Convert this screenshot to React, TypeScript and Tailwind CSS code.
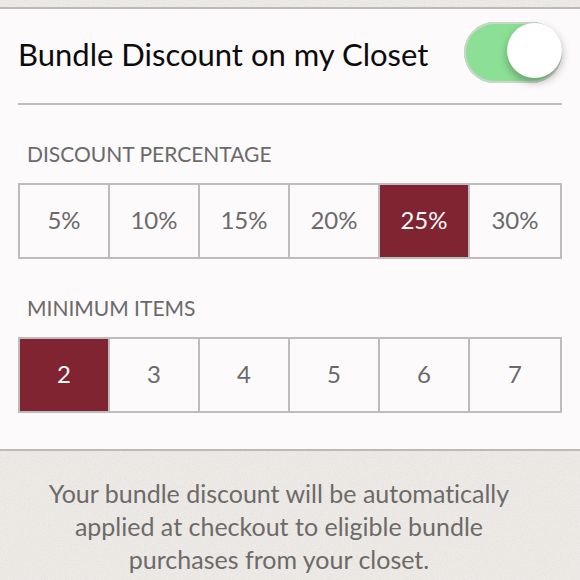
import { useState } from "react";

type SegmentGroupProps = {
  label: string;
  name: string;
  options: number[];
  suffix?: string;
  value: number;
  onChange: (value: number) => void;
};

function SegmentGroup({ label, name, options, suffix = "", value, onChange }: SegmentGroupProps) {
  return (
    <fieldset>
      <legend className="mb-[15px] px-[9px] text-[21px] leading-7 text-[#6b696a] uppercase">{label}</legend>
      <div className="grid grid-cols-6 divide-x-2 divide-[#bdbbbc] border-2 border-[#bdbbbc]">
        {options.map((option) => (
          <label
            key={option}
            className="flex h-[72px] cursor-pointer items-center justify-center pb-0.5 text-2xl text-[#6b696a] has-checked:bg-[#7f2430] has-checked:text-[#fcfafb] has-focus-visible:underline"
          >
            <input
              type="radio"
              name={name}
              value={option}
              checked={option === value}
              onChange={() => onChange(option)}
              className="sr-only"
            />
            {option}
            {suffix}
          </label>
        ))}
      </div>
    </fieldset>
  );
}

/* Fine paper grain laid behind the content */
function PaperGrain() {
  return (
    <svg aria-hidden="true" className="absolute inset-0 -z-10 h-full w-full opacity-20">
      <filter id="paper-grain">
        <feTurbulence type="fractalNoise" baseFrequency="0.7" numOctaves="2" stitchTiles="stitch" />
        <feColorMatrix values="0.33 0.33 0.33 0 0  0.33 0.33 0.33 0 0  0.33 0.33 0.33 0 0.02  0 0 0 0 1" />
        <feComponentTransfer>
          <feFuncR type="linear" slope="1" intercept="0.35" />
          <feFuncG type="linear" slope="1" intercept="0.34" />
          <feFuncB type="linear" slope="1" intercept="0.3" />
        </feComponentTransfer>
      </filter>
      <rect width="100%" height="100%" filter="url(#paper-grain)" />
    </svg>
  );
}

export default function App() {
  const [enabled, setEnabled] = useState(true);
  const [discount, setDiscount] = useState(25);
  const [minimum, setMinimum] = useState(2);

  return (
    <main className="relative isolate min-h-screen bg-[#ebe8e4] pt-[7px] font-['Lato',sans-serif] [font-variant-ligatures:none]">
      <PaperGrain />
      <section className="border-y-2 border-[#bdbbb7] bg-[#fcfafb] px-[18px] pb-9">
        <div className="flex h-24 items-start justify-between border-b-2 border-[#bdbbbc] pt-[13px]">
          <label htmlFor="bundle-discount" className="text-[31px] leading-[64px] text-[#0c0b0c]">
            Bundle Discount on my Closet
          </label>
          <input
            id="bundle-discount"
            type="checkbox"
            role="switch"
            checked={enabled}
            onChange={() => setEnabled(!enabled)}
            className="flex h-[61px] w-[98px] shrink-0 cursor-pointer appearance-none rounded-full bg-[#dddddd] pt-px inset-shadow-[0_0_0_2px_#c9d6c9] before:size-[55px] before:rounded-full before:bg-white before:shadow-[0_4px_8px_rgba(0,0,0,0.3)] checked:justify-end checked:bg-[#8ce095]"
          />
        </div>
        <div className="flex flex-col gap-[35px] pt-[35px]">
          <SegmentGroup
            label="Discount Percentage"
            name="discount"
            options={[5, 10, 15, 20, 25, 30]}
            suffix="%"
            value={discount}
            onChange={setDiscount}
          />
          <SegmentGroup
            label="Minimum Items"
            name="minimum"
            options={[2, 3, 4, 5, 6, 7]}
            value={minimum}
            onChange={setMinimum}
          />
        </div>
      </section>
      <p className="pt-[26px] pr-[51px] pl-[29px] text-center text-[25px] leading-[33px] text-[#6d6a69]">
        Your bundle discount will be automatically applied at checkout to eligible bundle purchases from your closet.
      </p>
    </main>
  );
}
